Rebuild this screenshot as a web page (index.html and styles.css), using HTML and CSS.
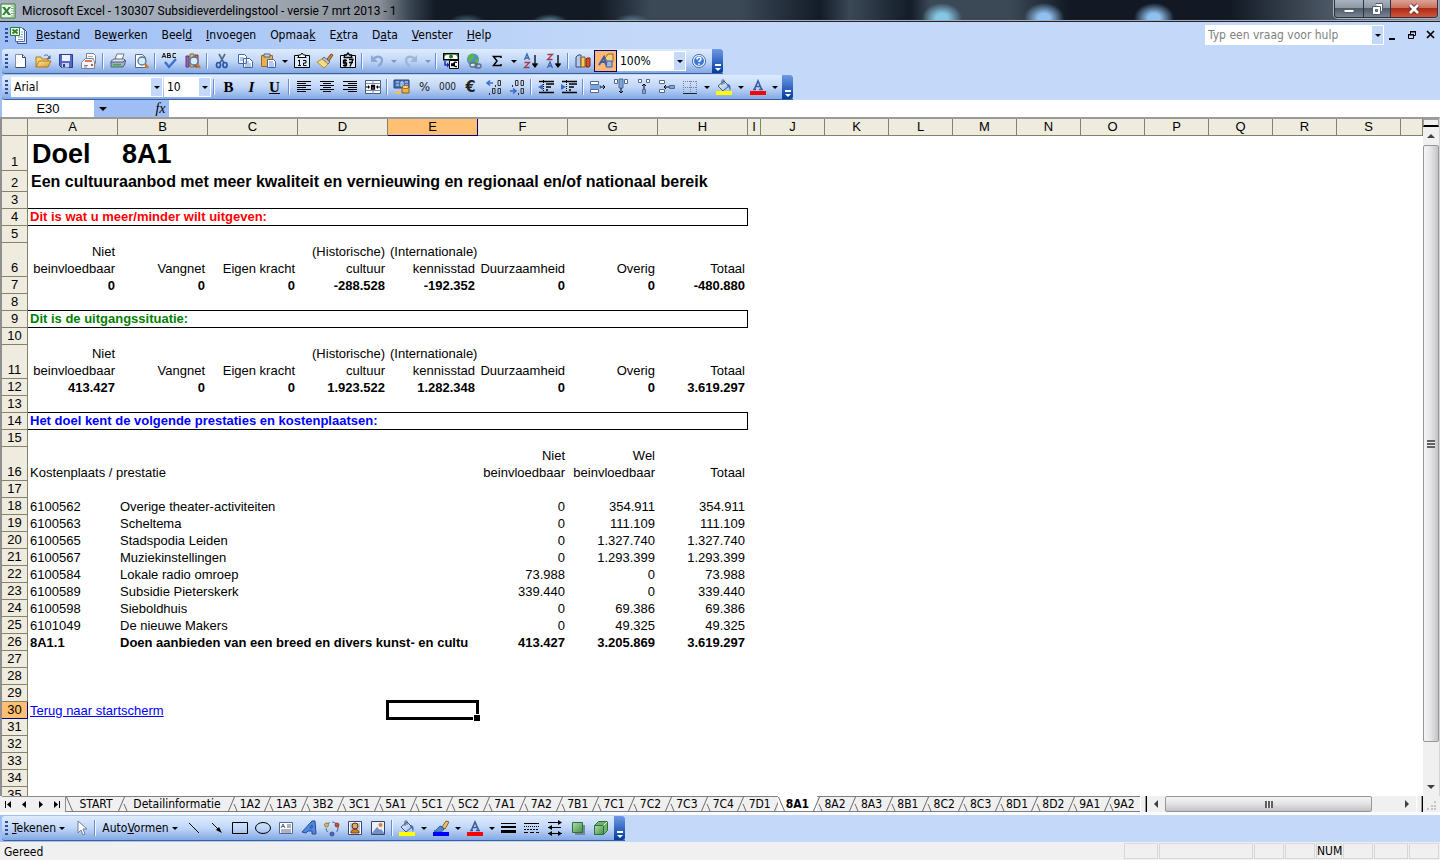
FILE: index.html
```html
<!DOCTYPE html>
<html lang="nl">
<head>
<meta charset="utf-8">
<title>Microsoft Excel - 130307 Subsidieverdelingstool - versie 7 mrt 2013 - 1</title>
<link rel="stylesheet" href="styles.css">
</head>
<body>
<svg class="defs" aria-hidden="true">
  <defs>
    <linearGradient id="gBlue" x1="0" y1="0" x2="1" y2="1"><stop offset="0" stop-color="#fff"/><stop offset="1" stop-color="#8fb0e6"/></linearGradient>
    <linearGradient id="gGreen" x1="0" y1="0" x2="1" y2="1"><stop offset="0" stop-color="#b5dcae"/><stop offset="1" stop-color="#3f8f45"/></linearGradient>
    <linearGradient id="gGold" x1="0" y1="0" x2="1" y2="1"><stop offset="0" stop-color="#ffeaa0"/><stop offset="1" stop-color="#d89a2c"/></linearGradient>
    <symbol id="excel" viewBox="0 0 16 16"><path d="M1 1h14v14H1z" fill="#e8f3e4" stroke="#2f7a34"/><path d="M11 3h3v10h-3" fill="#fff" stroke="#7fb080"/><path d="M11 5.500h3M11 8h3M11 10.500h3" stroke="#7fb080"/><path d="M2 4h9v8H2z" fill="#fff"/><path d="M2 4h3l1.700 2.500L8.500 4H11L8 8l3 4H8L6.300 9.500 4.500 12H2l3-4z" fill="#2c8534"/></symbol>
    <symbol id="bucket" viewBox="0 0 16 16"><path d="M2 7l6-5 5 5-6 5z" fill="url(#gBlue)" stroke="#44597f"/><path d="M6 6V1.500c0-1 2-1 2 0V5" fill="none" stroke="#44597f"/><path d="M12 5c3 1 3 4 2 7-1-3-1-4-3-5z" fill="#3d69b5"/><path d="M0 12h16v4H0z" fill="#ff0"/></symbol>
    <symbol id="fontcolor" viewBox="0 0 16 16"><path d="M3 10.500h3M9 10.500h4M4.500 10L8 2l3.500 8M6 7.500h4" fill="none" stroke="#3b5c9e" stroke-width="1.600"/><path d="M0 12h16v4H0z" fill="#f00"/></symbol>
    <symbol id="magnifier" viewBox="0 0 16 16"><circle cx="9" cy="8" r="4" fill="#d5edfb" stroke="#58718e" stroke-width="1.300"/><path d="M12 11l3 4" stroke="#c77b24" stroke-width="2.400"/></symbol>
  </defs>
</svg>

<div class="window">
  <header class="titlebar">
    <svg class="icon"><use href="#excel"/></svg>
    <h1>Microsoft Excel - 130307 Subsidieverdelingstool - versie 7 mrt 2013 - 1</h1>
    <div class="winbuttons">
      <button class="win-min" aria-label="Minimaliseren"><svg width="14" height="12"><path d="M2 6.500h10v3H2z" fill="#fff" stroke="#555d68"/></svg></button>
      <button class="win-max" aria-label="Vorig formaat"><svg width="14" height="14"><path d="M5.500 1.500h7v8h-2M2.500 4.500h8v8h-8z" fill="#fff" stroke="#555d68"/><path d="M5.500 7.500h2v2h-2z" fill="#8b949f" stroke="#555d68"/></svg></button>
      <button class="win-close" aria-label="Sluiten"><svg width="14" height="12"><path d="M3 2l8 8M11 2l-8 8" stroke="#56272a" stroke-width="4.500"/><path d="M3 2l8 8M11 2l-8 8" stroke="#fff" stroke-width="2.800"/></svg></button>
    </div>
  </header>

  <div class="bars">
    <nav class="menubar">
      <i class="grip"></i>
      <svg width="18" height="18" viewBox="0 0 18 18"><path d="M8.500 2.500h6l3 3v12h-9z" fill="#dfe9fa" stroke="#2f4f94"/><path d="M6.500 1.500h6l3 3v11h-9z" fill="#fff" stroke="#4c6aa8"/><path d="M12 6h2M12 8.500h2M9 11h5M9 13.500h5" fill="none" stroke="#7f9bd0"/><path d="M1.500 1.500h9v8h-9z" fill="#e6f4e3" stroke="#2f7a34"/><path d="M3.500 3.500l5 4M8.500 3.500l-5 4" stroke="#2c8534" stroke-width="2"/></svg>
      <button><u>B</u>estand</button><button>Be<u>w</u>erken</button><button>Beel<u>d</u></button><button><u>I</u>nvoegen</button><button>Opmaa<u>k</u></button><button>E<u>x</u>tra</button><button>D<u>a</u>ta</button><button><u>V</u>enster</button><button><u>H</u>elp</button>
      <div class="combo ask"><input type="text" aria-label="Typ een vraag voor hulp" placeholder="Typ een vraag voor hulp"><button class="drop" aria-label="Eerdere vragen"></button></div>
      <div class="docbuttons">
        <button aria-label="Document minimaliseren"><svg width="10" height="10"><path d="M1 8h6v2H1z"/></svg></button>
        <button aria-label="Document herstellen"><svg width="10" height="10"><path d="M3.500 4V1.500h5v4H6M1.500 4.500h5v4h-5z" fill="none" stroke="#000"/><path d="M3 1h6v1.500H3zM1 4h6v1.500H1z"/></svg></button>
        <button aria-label="Document sluiten"><svg width="10" height="10"><path d="M1 1l7 7M8 1L1 8" stroke="#000" stroke-width="1.700"/></svg></button>
      </div>
    </nav>

    <div class="toolbar" role="toolbar" aria-label="Standaard">
      <i class="grip"></i>
      <button aria-label="Nieuw"><svg class="icon"><path d="M3.500 1.500h7l3 3v10h-10z" fill="#fff" stroke="#8091ad"/><path d="M10.500 1.500v3h3v10h-10" fill="none" stroke="#35496d"/></svg></button>
      <button aria-label="Openen"><svg class="icon"><path d="M1 14V4h5l1 2h6v3" fill="#f7d77d" stroke="#ad761d"/><path d="M1 14l3-6h12l-3 6z" fill="url(#gGold)" stroke="#ad761d"/><path d="M9 3c2-2 4-1 5 1" fill="none" stroke="#45649c"/><path d="M15.500 2v4h-4z" fill="#45649c"/></svg></button>
      <button aria-label="Opslaan"><svg class="icon"><path d="M1.500 1.500h13v13h-11l-2-2z" fill="#5766c9" stroke="#303b8a"/><path d="M4 2h8v6H4z" fill="#eef1ff"/><path d="M4 10h7v4.500H4z" fill="#c9d0ea"/><path d="M5 11h2v3H5z" fill="#303b8a"/></svg></button>
      <button aria-label="E-mail"><svg class="icon"><path d="M5.500.500h7l2 2v8h-9z" fill="#fff" stroke="#7a8496"/><path d="M7 3.500h5M7 5.500h6" stroke="#aab2c0"/><path d="M.5 9.500l4-4h7l2 3v7H.500z" fill="#f4f5f9" stroke="#7a8496"/><path d="M4 8h7" stroke="#e0764f" stroke-width="2"/><path d="M10 11h2v2h-2z" fill="#d04b35"/><path d="M3 12.500h4M3 14h3" stroke="#7d879a"/></svg></button>
      <i class="sep"></i>
      <button aria-label="Afdrukken"><svg class="icon"><path d="M5 6l2-5h7l-2 6z" fill="#fff" stroke="#68778f"/><path d="M1 8l3-2h10l2 2-2 2H1z" fill="#dce2ec" stroke="#5e6d85"/><path d="M1 9h12l2-2v4l-2 3H1z" fill="#9faec5" stroke="#4f5e78"/><path d="M3 11h8v1.500H3z" fill="#42a94b"/></svg></button>
      <button aria-label="Afdrukvoorbeeld"><svg class="icon"><path d="M2.500 1.500h7l3 3v10h-10z" fill="#fff" stroke="#54698d"/><use href="#magnifier"/></svg></button>
      <i class="sep"></i>
      <button aria-label="Spelling"><svg class="icon"><path d="M0 5l2-5 2 5M1 3.500h2M5.500 0v5M5.500.500h2.500v2H5.500M5.500 4.500h3v-2h-3M14 .5h-3v4h3" fill="none" stroke="#222"/><path d="M3 9l4 5 7-8" fill="none" stroke="#3b70cf" stroke-width="2.400"/></svg></button>
      <button aria-label="Onderzoek"><svg class="icon"><path d="M1 3h3v11H1z" fill="#9a5fb0" stroke="#5f3a80"/><path d="M5 1h4v13H5z" fill="#d8c27b" stroke="#716b40"/><path d="M10 2h3v12h-3z" fill="#c8705a" stroke="#813a34"/><use href="#magnifier"/></svg></button>
      <i class="sep"></i>
      <button aria-label="Knippen"><svg class="icon"><path d="M5 1l5 9M11 1L6 10" stroke="#54698d" stroke-width="1.600"/><ellipse cx="4.500" cy="12" rx="2" ry="2.500" fill="none" stroke="#2855a8" stroke-width="1.700"/><ellipse cx="11" cy="12" rx="2" ry="2.500" fill="none" stroke="#2855a8" stroke-width="1.700"/></svg></button>
      <button aria-label="Kopiëren"><svg class="icon"><path d="M1.500 1.500h6l2 2v7h-8zM6.500 5.500h6l3 3v6h-9z" fill="#fff" stroke="#3e65af"/><path d="M3 5h4M3 7h3M8 9h4M8 11h6M8 13h6" stroke="#6f91cf"/></svg></button>
      <button aria-label="Plakken"><svg class="icon"><path d="M1.500 2.500h11v11h-11z" fill="#e8b14b" stroke="#9f6a1c"/><path d="M4 1h6v3H4z" fill="#ccd3de" stroke="#5b6270"/><path d="M7.500 6.500h6l2 2v6h-8z" fill="#fff" stroke="#3e65af"/><path d="M9 9h4M9 11h5M9 13h5" stroke="#6f91cf"/></svg></button>
      <button class="arrow" aria-label="Plakopties"></button>
      <button aria-label="Waarden plakken"><svg class="icon"><path d="M4 2.500H.500v12h15v-12H12" fill="#dcebfd" stroke="#000"/><path d="M3.500 4.500h9M4.500 4V2h2L8 0l1.500 2h2v2" fill="#fff" stroke="#000"/><path d="M4 8l1.500-1v6M4 12.500h3M9 7.500h3v2.500H9.500v2.500h3" fill="none" stroke="#000"/></svg></button>
      <button aria-label="Opmaak kopiëren"><svg class="icon"><path d="M10 6l4-5 2 1-4 6z" fill="#d0843a" stroke="#804920"/><path d="M7 4l6 5-2 2-6-5z" fill="#b9c2d2" stroke="#606c82"/><path d="M5 6l6 5-4 4-7-6z" fill="#f5dc87" stroke="#b48a31"/></svg></button>
      <button aria-label="Opmaak plakken"><svg class="icon"><path d="M4 2.500H.500v12h15v-12H12" fill="#dcebfd" stroke="#000"/><path d="M3.500 4.500h9M4.500 4V2h2L8 0l1.500 2h2v2M7 7.500H3.500v2.500h3v2.500H3M5 6v8M9 6.500h4l-3 7M9 9.500h4" fill="none" stroke="#000" stroke-width="1.300"/></svg></button>
      <i class="sep"></i>
      <button aria-label="Ongedaan maken"><svg class="icon"><path d="M4 6c4-4 9-2 9 1 0 3-2 5-4 6" fill="none" stroke="#8ba7d8" stroke-width="2.400"/><path d="M2 2v7h7z" fill="#8ba7d8"/></svg></button>
      <button class="arrow dim" aria-label="Opties ongedaan maken"></button>
      <button aria-label="Opnieuw"><svg class="icon"><path d="M12 6c-4-4-9-2-9 1 0 3 2 5 4 6" fill="none" stroke="#9fb5d9" stroke-width="2.400"/><path d="M14 2v7H7z" fill="#9fb5d9"/></svg></button>
      <button class="arrow dim" aria-label="Opties opnieuw"></button>
      <i class="sep"></i>
      <button aria-label="Euroconversie"><svg class="icon"><path d="M.7.700h14.600v6H.700z" fill="#fff" stroke="#000" stroke-width="1.400"/><path d="M1 1h3L1 4zM15 1h-3l3 3z" fill="#188027"/><circle cx="8" cy="3.500" r="2" fill="#188027"/><path d="M6.500 7.500h9v8h-9z" fill="#fff" stroke="#000"/><path d="M14 9.500c-4-2-5 5 0 4M8 11h4M8 12.500h4" fill="none" stroke="#000" stroke-width="1.300"/><path d="M2 8v4h3" fill="none" stroke="#1d2bb5" stroke-width="1.500"/><path d="M4 9.500l3 2.500-3 2.500z" fill="#1d2bb5"/></svg></button>
      <button aria-label="Hyperlink"><svg class="icon"><circle cx="7" cy="6.500" r="6" fill="#4c8ecf"/><path d="M3 2c4-3 7 0 5 3S5 6 5 10C1 9 1 4 3 2zM9 6l4-1-1 5-3 1z" fill="#5cb357"/><rect x="4" y="10" width="7" height="4" rx="2" fill="#dce5f0" stroke="#5b6c86" stroke-width="1.300"/><rect x="9" y="11" width="6" height="4" rx="2" fill="none" stroke="#5b6c86" stroke-width="1.300"/></svg></button>
      <button aria-label="AutoSom"><svg class="icon"><path d="M12 5V3.500H4.500L8 8l-3.500 4.500H12V11" fill="none" stroke="#000" stroke-width="1.500"/></svg></button>
      <button class="arrow" aria-label="Opties AutoSom"></button>
      <button aria-label="Oplopend sorteren"><svg class="icon"><path d="M1.500 7L4 1l2.500 6M2.500 5h3" fill="none" stroke="#3e63b5" stroke-width="1.300"/><path d="M1.500 9.500h5l-5 5h5" fill="none" stroke="#a53a4a" stroke-width="1.300"/><path d="M12 2v11M9.500 10.500L12 14l2.500-3.500" fill="#000" stroke="#000" stroke-width="1.300"/></svg></button>
      <button aria-label="Aflopend sorteren"><svg class="icon"><path d="M1.500 1.500h5l-5 5h5" fill="none" stroke="#a53a4a" stroke-width="1.300"/><path d="M1.500 15L4 9l2.500 6M2.500 13h3" fill="none" stroke="#3e63b5" stroke-width="1.300"/><path d="M12 2v11M9.500 10.500L12 14l2.500-3.500" fill="#000" stroke="#000" stroke-width="1.300"/></svg></button>
      <i class="sep"></i>
      <button aria-label="Wizard Grafieken"><svg class="icon"><path d="M1 4l2-2h3v12H1z" fill="#b7c7e6" stroke="#344d84"/><path d="M6 5l1-1h3v10H6z" fill="#f4cf58" stroke="#8a5b1a"/><path d="M11 6l1-1h3v8l-1 1h-3z" fill="#d84f2a" stroke="#7a2417"/></svg></button>
      <button class="on" aria-label="Tekenen"><svg class="icon"><path d="M7 5l3-4h5v7l-3 4z" fill="#f2d27b" stroke="#8c6626"/><path d="M9 8h5v6H8z" fill="#9db8e8" stroke="#3d5ea4"/><path d="M1 12L6 4l2 8M3 9h5" fill="none" stroke="#3d5ea4" stroke-width="2"/></svg></button>
      <div class="combo zoom"><select aria-label="In- en uitzoomen"><option>100%</option></select><span class="drop"></span></div>
      <button aria-label="Help"><svg class="icon"><circle cx="8" cy="8" r="6.500" fill="#fff" stroke="#3565ba"/><circle cx="8" cy="8" r="5" fill="#3f78d6"/><path d="M6 6.500c0-3 4-3 4-.5 0 1.500-2 1.500-2 3M8 10.500v1.500" fill="none" stroke="#fff" stroke-width="1.600"/></svg></button>
      <button class="cap" aria-label="Werkbalkopties Standaard"></button>
    </div>

    <div class="toolbar" role="toolbar" aria-label="Opmaak">
      <i class="grip"></i>
      <div class="combo font"><select aria-label="Lettertype"><option>Arial</option></select><span class="drop"></span></div>
      <div class="combo size"><select aria-label="Tekengrootte"><option>10</option></select><span class="drop"></span></div>
      <i class="sep"></i>
      <button class="letter" aria-label="Vet"><b>B</b></button>
      <button class="letter" aria-label="Cursief"><em>I</em></button>
      <button class="letter" aria-label="Onderstrepen"><u>U</u></button>
      <i class="sep"></i>
      <button aria-label="Links uitlijnen"><svg class="icon"><path d="M1 2.500h14M1 4.500h9M1 6.500h14M1 8.500h9M1 10.500h14M1 12.500h9" stroke="#000"/></svg></button>
      <button aria-label="Centreren"><svg class="icon"><path d="M1 2.500h14M4 4.500h8M1 6.500h14M4 8.500h8M1 10.500h14M4 12.500h8" stroke="#000"/></svg></button>
      <button aria-label="Rechts uitlijnen"><svg class="icon"><path d="M1 2.500h14M6 4.500h9M1 6.500h14M6 8.500h9M1 10.500h14M6 12.500h9" stroke="#000"/></svg></button>
      <button aria-label="Samenvoegen en centreren"><svg class="icon"><path d="M.5 1.500h15v13H.500z" fill="#fff" stroke="#44597f"/><path d="M8 1v3M8 12v3M1 4.500h15M1 11.500h15" stroke="#7187b0"/><path d="M6 6.500h3.500v3.500H6.500v-2h3" fill="none" stroke="#000" stroke-width="1.300"/><path d="M1 8h3M15 8h-3" stroke="#000"/><path d="M3 6v4l2-2zM13 6v4l-2-2z"/></svg></button>
      <i class="sep"></i>
      <button aria-label="Valuta"><svg class="icon"><path d="M0 1h15v8H0z" fill="#486fb8" stroke="#274479"/><path d="M2 3h3M2 6h3M7 3h2v4H7zM11 3h3M11 6h3" fill="none" stroke="#d6e5ff"/><path d="M8 8h7v6H8z" fill="#e9b445" stroke="#8c6119"/><ellipse cx="11.500" cy="8" rx="3.500" ry="1.500" fill="#ffe58f" stroke="#8c6119"/><ellipse cx="4" cy="13.500" rx="3" ry="1.500" fill="#f1c252"/></svg></button>
      <button class="sign" aria-label="Procentnotatie">%</button>
      <button class="sign small" aria-label="Duizendtalnotatie">000</button>
      <button class="sign euro" aria-label="Euro">€</button>
      <button aria-label="Meer decimalen"><svg class="icon"><path d="M1 4h6M4 1.500L1 4l3 2.500" fill="none" stroke="#376bca" stroke-width="1.500"/><path d="M9.500 6v2M12 1.500h2.500v5H12zM3.500 14v2M6.500 9.500H9v5H6.500zM12 9.500h2.500v5H12z" fill="none" stroke="#333"/></svg></button>
      <button aria-label="Minder decimalen"><svg class="icon"><path d="M1 12h6M4 9.500L7 12l-3 2.500" fill="none" stroke="#376bca" stroke-width="1.500"/><path d="M3.500 6v2M6.500 1.500H9v5H6.500zM12 1.500h2.500v5H12zM9.500 14v2M12 9.500h2.500v5H12z" fill="none" stroke="#333"/></svg></button>
      <i class="sep"></i>
      <button aria-label="Insprong verkleinen"><svg class="icon"><path d="M1 2.500h15M8 5h8M8 8h5M8 11h2M1 13.500h15" stroke="#000" stroke-width="1.400"/><path d="M5.500 1v14" stroke="#000" stroke-dasharray="1 1"/><path d="M5 5v6L0 8z" fill="#376bca"/></svg></button>
      <button aria-label="Insprong vergroten"><svg class="icon"><path d="M1 2.500h15M8 5h8M8 8h5M8 11h2M1 13.500h15" stroke="#000" stroke-width="1.400"/><path d="M5.500 1v14" stroke="#000" stroke-dasharray="1 1"/><path d="M0 5v6l5-3z" fill="#376bca"/></svg></button>
      <i class="sep"></i>
      <button aria-label="Cellen naar rechts"><svg class="icon"><path d="M.5 2.500h8v3h-8zM.5 10.500h8v3h-8z" fill="#fff" stroke="#54698d"/><path d="M0 6h11v4H0z" fill="#78a5e4"/><path d="M10 8h5M13 6l2 2-2 2" fill="none" stroke="#000"/></svg></button>
      <button aria-label="Cellen omlaag"><svg class="icon"><path d="M1.500.500h3v4h-3zM11.500.500h3v4h-3z" fill="#fff" stroke="#54698d"/><path d="M6 0h4v9H6z" fill="#78a5e4" stroke="#54698d"/><path d="M8 9v5M6 12l2 2 2-2" fill="none" stroke="#000"/></svg></button>
      <button aria-label="Cellen omhoog"><svg class="icon"><path d="M2.500.500h3v3h-3zM10.500.500h3v3h-3z" fill="#fff" stroke="#54698d"/><path d="M6.500 10.500h3v4h-3z" fill="#78a5e4" stroke="#54698d"/><path d="M8 10V5M6 7l2-2 2 2" fill="none" stroke="#000"/></svg></button>
      <button aria-label="Cellen naar links"><svg class="icon"><path d="M.5 1.500h5v3h-5zM.5 10.500h5v3h-5z" fill="#fff" stroke="#54698d"/><path d="M10.500 6.500h5v3h-5z" fill="#78a5e4" stroke="#54698d"/><path d="M10 8H5M7 6L5 8l2 2" fill="none" stroke="#000"/></svg></button>
      <button aria-label="Randen"><svg class="icon"><path d="M1.500 2v12M8.500 2v12M14.500 2v12M1 2.500h14M1 8.500h14" stroke="#77839a" stroke-dasharray="1 1"/><path d="M1 14.500h14" stroke="#222"/></svg></button>
      <button class="arrow" aria-label="Opties randen"></button>
      <button aria-label="Opvulkleur"><svg class="icon"><use href="#bucket"/></svg></button>
      <button class="arrow" aria-label="Opties opvulkleur"></button>
      <button aria-label="Tekstkleur"><svg class="icon"><use href="#fontcolor"/></svg></button>
      <button class="arrow" aria-label="Opties tekstkleur"></button>
      <button class="cap" aria-label="Werkbalkopties Opmaak"></button>
    </div>
  </div>

  <div class="formulabar">
    <input class="namebox" type="text" aria-label="Naamvak" value="E30">
    <button class="namedrop" aria-label="Namen"></button>
    <button class="fx" aria-label="Functie invoegen">fx</button>
    <input class="formula" type="text" aria-label="Formule">
  </div>

  <main class="workbook">
    <div class="sheet">
      <table class="grid">
        <colgroup><col class="c-head"><col class="c-wide" span="8"><col class="c-slim"><col class="c-std" span="10"><col></colgroup>
        <thead><tr><th></th><th>A</th><th>B</th><th>C</th><th>D</th><th class="sel">E</th><th>F</th><th>G</th><th>H</th><th>I</th><th>J</th><th>K</th><th>L</th><th>M</th><th>N</th><th>O</th><th>P</th><th>Q</th><th>R</th><th>S</th><th></th></tr></thead>
        <tbody>
          <tr class="r-title"><th>1</th><td>Doel</td><td colspan="3">8A1</td></tr>
          <tr class="r-sub"><th>2</th><td colspan="9">Een cultuuraanbod met meer kwaliteit en vernieuwing en regionaal en/of nationaal bereik</td></tr>
          <tr><th>3</th><td class="line" colspan="8"></td></tr>
          <tr><th>4</th><td class="box red" colspan="8">Dit is wat u meer/minder wilt uitgeven:</td></tr>
          <tr><th>5</th></tr>
          <tr class="r-two num"><th>6</th><td>Niet<br>beinvloedbaar</td><td>Vangnet</td><td>Eigen kracht</td><td>(Historische)<br>cultuur</td><td>(Internationale)<br>kennisstad</td><td>Duurzaamheid</td><td>Overig</td><td>Totaal</td></tr>
          <tr class="num bold"><th>7</th><td>0</td><td>0</td><td>0</td><td>-288.528</td><td>-192.352</td><td>0</td><td>0</td><td>-480.880</td></tr>
          <tr><th>8</th><td class="line" colspan="8"></td></tr>
          <tr><th>9</th><td class="box green" colspan="8">Dit is de uitgangssituatie:</td></tr>
          <tr><th>10</th></tr>
          <tr class="r-two num"><th>11</th><td>Niet<br>beinvloedbaar</td><td>Vangnet</td><td>Eigen kracht</td><td>(Historische)<br>cultuur</td><td>(Internationale)<br>kennisstad</td><td>Duurzaamheid</td><td>Overig</td><td>Totaal</td></tr>
          <tr class="num bold"><th>12</th><td>413.427</td><td>0</td><td>0</td><td>1.923.522</td><td>1.282.348</td><td>0</td><td>0</td><td>3.619.297</td></tr>
          <tr><th>13</th><td class="line" colspan="8"></td></tr>
          <tr><th>14</th><td class="box blue" colspan="8">Het doel kent de volgende prestaties en kostenplaatsen:</td></tr>
          <tr><th>15</th></tr>
          <tr class="r-two num"><th>16</th><td class="txt" colspan="5">Kostenplaats / prestatie</td><td>Niet<br>beinvloedbaar</td><td>Wel<br>beinvloedbaar</td><td>Totaal</td></tr>
          <tr><th>17</th></tr>
          <tr class="num"><th>18</th><td class="txt">6100562</td><td class="txt" colspan="4">Overige theater-activiteiten</td><td>0</td><td>354.911</td><td>354.911</td></tr>
          <tr class="num"><th>19</th><td class="txt">6100563</td><td class="txt" colspan="4">Scheltema</td><td>0</td><td>111.109</td><td>111.109</td></tr>
          <tr class="num"><th>20</th><td class="txt">6100565</td><td class="txt" colspan="4">Stadspodia Leiden</td><td>0</td><td>1.327.740</td><td>1.327.740</td></tr>
          <tr class="num"><th>21</th><td class="txt">6100567</td><td class="txt" colspan="4">Muziekinstellingen</td><td>0</td><td>1.293.399</td><td>1.293.399</td></tr>
          <tr class="num"><th>22</th><td class="txt">6100584</td><td class="txt" colspan="4">Lokale radio omroep</td><td>73.988</td><td>0</td><td>73.988</td></tr>
          <tr class="num"><th>23</th><td class="txt">6100589</td><td class="txt" colspan="4">Subsidie Pieterskerk</td><td>339.440</td><td>0</td><td>339.440</td></tr>
          <tr class="num"><th>24</th><td class="txt">6100598</td><td class="txt" colspan="4">Sieboldhuis</td><td>0</td><td>69.386</td><td>69.386</td></tr>
          <tr class="num"><th>25</th><td class="txt">6101049</td><td class="txt" colspan="4">De nieuwe Makers</td><td>0</td><td>49.325</td><td>49.325</td></tr>
          <tr class="num bold"><th>26</th><td class="txt">8A1.1</td><td class="txt clip" colspan="4">Doen aanbieden van een breed en divers kunst- en cultu</td><td>413.427</td><td>3.205.869</td><td>3.619.297</td></tr>
          <tr><th>27</th></tr>
          <tr><th>28</th></tr>
          <tr><th>29</th></tr>
          <tr><th class="sel">30</th><td colspan="4"><a href="#start">Terug naar startscherm</a></td><td class="active"></td></tr>
          <tr><th>31</th></tr>
          <tr><th>32</th></tr>
          <tr><th>33</th></tr>
          <tr><th>34</th></tr>
          <tr><th>35</th></tr>
        </tbody>
      </table>
    </div>
    <div class="vscroll">
      <i class="vsplit"></i>
      <button class="up" aria-label="Omhoog schuiven"></button>
      <div class="thumb"><i></i></div>
      <div class="track"></div>
      <button class="down" aria-label="Omlaag schuiven"></button>
    </div>
  </main>

  <div class="tabrow">
    <div class="tabnav">
      <button aria-label="Eerste blad"><svg width="8" height="9"><path d="M1.500 1v7" stroke="#000"/><path d="M7 1v7L3 4.500z"/></svg></button>
      <button aria-label="Vorig blad"><svg width="8" height="9"><path d="M6 1v7L2 4.500z"/></svg></button>
      <button aria-label="Volgend blad"><svg width="8" height="9"><path d="M2 1v7l4-3.500z"/></svg></button>
      <button aria-label="Laatste blad"><svg width="8" height="9"><path d="M6.500 1v7" stroke="#000"/><path d="M1 1v7l4-3.500z"/></svg></button>
    </div>
    <div class="tabs">
      <button class="start">START</button><button class="detail">Detailinformatie</button><button>1A2</button><button>1A3</button><button>3B2</button><button>3C1</button><button>5A1</button><button>5C1</button><button>5C2</button><button>7A1</button><button>7A2</button><button>7B1</button><button>7C1</button><button>7C2</button><button>7C3</button><button>7C4</button><button>7D1</button><button class="current">8A1</button><button>8A2</button><button>8A3</button><button>8B1</button><button>8C2</button><button>8C3</button><button>8D1</button><button>8D2</button><button>9A1</button><button class="last">9A2</button>
    </div>
    <i class="hsplit"></i>
    <div class="hscroll">
      <button class="left" aria-label="Naar links schuiven"></button>
      <div class="thumb"><i></i></div>
      <div class="track"></div>
      <button class="right" aria-label="Naar rechts schuiven"></button>
    </div>
    <i class="hsplit"></i>
    <svg class="corner" width="16" height="16"><path d="M10 5h2v2h-2zM7 9h2v2H7zM10 9h2v2h-2zM3 12h2v2H3zM7 12h2v2H7zM10 12h2v2h-2z" fill="#c3c3c3"/></svg>
  </div>

  <div class="drawrow">
    <div class="toolbar" role="toolbar" aria-label="Tekenen">
      <i class="grip"></i>
      <button class="label tekenen"><span><u>T</u>ekenen</span></button>
      <button aria-label="Objecten selecteren"><svg class="icon"><path d="M5 1v12l3-3 2 5 2-1-2-5h4z" fill="#fff" stroke="#6c7d9b"/></svg></button>
      <i class="sep"></i>
      <button class="label vormen"><span>Auto<u>V</u>ormen</span></button>
      <button aria-label="Lijn"><svg class="icon"><path d="M3 3l10 10" stroke="#000"/></svg></button>
      <button aria-label="Pijl"><svg class="icon"><path d="M3 3l7 7" stroke="#000"/><path d="M13 13l-6-3 3-3z"/></svg></button>
      <button aria-label="Rechthoek"><svg class="icon"><path d="M.5 2.500h15v11H.500z" fill="none" stroke="#000"/></svg></button>
      <button aria-label="Ovaal"><svg class="icon"><ellipse cx="8" cy="8" rx="7.500" ry="5.500" fill="none" stroke="#000"/></svg></button>
      <button aria-label="Tekstvak"><svg class="icon"><path d="M1.500 2.500h13v11h-13z" fill="#fff" stroke="#54698d"/><path d="M3 8l2-4 2 4M4 6.500h2M9 5h4M9 7h4M3 10h10M3 12h10" fill="none" stroke="#54698d"/></svg></button>
      <button aria-label="WordArt"><svg class="icon"><path d="M1 12L11 1h3l1 13h-4v-3H7l-2 2zM9 8h2V5z" fill="#4f88de" stroke="#234b99" fill-rule="evenodd"/></svg></button>
      <button aria-label="Diagram"><svg class="icon"><circle cx="8" cy="8" r="6" fill="none" stroke="#44597f" stroke-dasharray="4 3"/><circle cx="2.500" cy="5" r="2" fill="#e4bd49" stroke="#7d6424" stroke-width=".7"/><circle cx="13" cy="5" r="2" fill="#cc4e37" stroke="#6d2a1e" stroke-width=".7"/><circle cx="8" cy="14" r="2" fill="#5666c8" stroke="#2d3780" stroke-width=".7"/></svg></button>
      <button aria-label="Illustratie"><svg class="icon"><path d="M1.500 1.500h13v13h-13z" fill="#fff" stroke="#34466b"/><path d="M3 3h10v10H3z" fill="#b9c9df"/><circle cx="8" cy="6" r="3" fill="#e9a45c" stroke="#4b3326"/><path d="M4 13c0-5 8-5 8 0z" fill="#db7926" stroke="#703c1b"/></svg></button>
      <button aria-label="Afbeelding"><svg class="icon"><path d="M1.500 1.500h13v13h-13z" fill="#e8f0fb" stroke="#34466b"/><path d="M2 13l5-6 3 3 1-1 3 4v1H2z" fill="#6f8fc5"/><circle cx="10.500" cy="5" r="2" fill="#e57d32"/></svg></button>
      <i class="sep"></i>
      <button aria-label="Opvulkleur tekenen"><svg class="icon"><use href="#bucket"/></svg></button>
      <button class="arrow" aria-label="Opties opvulkleur tekenen"></button>
      <button aria-label="Lijnkleur"><svg class="icon"><path d="M9 7l4-6 3 1-4 7z" fill="#eec06d" stroke="#84602c"/><path d="M1 11c3 0 3-4 7-5l3 3c-1 3-6 4-10 2z" fill="#4f86d2" stroke="#2e599e"/><path d="M0 12h16v4H0z" fill="#00f"/></svg></button>
      <button class="arrow" aria-label="Opties lijnkleur"></button>
      <button aria-label="Tekstkleur tekenen"><svg class="icon"><use href="#fontcolor"/></svg></button>
      <button class="arrow" aria-label="Opties tekstkleur tekenen"></button>
      <button aria-label="Lijnstijl"><svg class="icon"><path d="M0 3.500h15" stroke="#000"/><path d="M0 7h15" stroke="#000" stroke-width="2"/><path d="M0 11.500h15" stroke="#000" stroke-width="3"/></svg></button>
      <button aria-label="Streepstijl"><svg class="icon"><path d="M0 3.500h15" stroke="#000"/><path d="M0 6.500h15" stroke="#000" stroke-dasharray="1 1"/><path d="M0 9.500h15" stroke="#000" stroke-dasharray="2 1"/><path d="M0 12.500h15" stroke="#000" stroke-dasharray="4 2"/></svg></button>
      <button aria-label="Pijlstijl"><svg class="icon"><path d="M1 2.500h13M1 7.500h13M1 13.500h14" stroke="#000"/><path d="M11 0l4 2.500L11 5zM5 5L1 7.500 5 10zM5 11l-4 2.500L5 16zM11 11l4 2.500-4 2.500z"/></svg></button>
      <button aria-label="Schaduwstijl"><svg class="icon"><path d="M5 5h10v10H5z" fill="#758798"/><path d="M2.500 2.500h10v10h-10z" fill="url(#gGreen)" stroke="#2e7137"/></svg></button>
      <button aria-label="3D-stijl"><svg class="icon"><path d="M1.500 5.500l4-4h9v9l-4 4h-9z" fill="#73b172" stroke="#2e7137"/><path d="M1.500 5.500h9v9h-9z" fill="url(#gGreen)" stroke="#2e7137"/><path d="M10.500 5.500l4-4" stroke="#dcf2d7"/></svg></button>
      <button class="cap" aria-label="Werkbalkopties Tekenen"></button>
    </div>
  </div>

  <footer class="status">
    <span class="msg">Gereed</span>
    <span class="cell c34"></span><span class="cell c94"></span><span class="cell c30"></span><span class="cell c30"></span><span class="cell c26">NUM</span><span class="cell c30"></span><span class="cell c34"></span><span class="cell c30"></span>
  </footer>
</div>
</body>
</html>
```
FILE: styles.css
```css
* { box-sizing: border-box; }

body {
  margin: 0;
  font: 12px/16px "DejaVu Sans Condensed", "DejaVu Sans", sans-serif;
  color: #000;
}

button, input, select {
  margin: 0;
  padding: 0;
  border: 0;
  border-radius: 0;
  background: none;
  font: inherit;
  color: inherit;
  outline: 0;
}

svg { display: block; }
.defs { position: absolute; width: 0; height: 0; }
.icon { width: 16px; height: 16px; overflow: visible; }

.window {
  display: flex;
  flex-direction: column;
  height: 100vh;
  overflow: hidden;
  background: #fff;
}

/* title bar */
.titlebar {
  display: flex;
  flex: none;
  align-items: center;
  height: 22px;
  padding-right: 2px;
  border-bottom: 1px solid #1e222c;
  box-shadow: inset 0 -1px #a9afb9;
  background:
    radial-gradient(ellipse 18px 8px at 467px 22px, #4a7087, transparent),
    radial-gradient(ellipse 18px 8px at 550px 22px, #6a9cbc, transparent),
    radial-gradient(ellipse 18px 8px at 632px 22px, #5a87a0, transparent),
    radial-gradient(ellipse 20px 15px at 942px 18px, #86c6e4 30%, transparent),
    radial-gradient(ellipse 20px 15px at 1044px 18px, #8fc0ee 30%, transparent),
    radial-gradient(ellipse 20px 15px at 1154px 18px, #8fc0ee 30%, transparent),
    linear-gradient(90deg, #a5b0be 0, #a0a8b3 260px, #888f98 380px, #3a4552 410px, #121a25 435px, #121a25 600px, #3b4856 650px, #3b4856 740px, #131c28 820px, #3b4856 850px, #131c28 910px, #3b4856 930px, #3b4856 1010px, #121925 1070px, #121925 1230px, #3b4552 1300px, #8b98a8 100%);
}
.titlebar h1 {
  margin: 0 auto 0 6px;
  font: 12px/20px Roboto, "Noto Sans", sans-serif;
}
.winbuttons {
  display: flex;
  align-self: flex-start;
  height: 18px;
  border: 1px solid #2b333f;
  border-top: 0;
  border-radius: 0 0 4px 4px;
  box-shadow: 0 0 0 1px #a8b0bc;
  overflow: hidden;
}
.winbuttons button {
  display: flex;
  align-items: center;
  justify-content: center;
  width: 28px;
  background: linear-gradient(#a9b2bd 0, #8c96a3 48%, #505b69 50%, #778494);
}
.winbuttons .win-max { width: 27px; border-left: 1px solid #2b333f; }
.winbuttons .win-close {
  width: 47px;
  border-left: 1px solid #2b333f;
  background: linear-gradient(#dba397 0, #cb6e5d 48%, #ad2d17 50%, #d1553a);
}

/* menu bar and tool bars */
.bars {
  display: flex;
  flex-direction: column;
  flex: none;
  gap: 1px;
  background: linear-gradient(90deg, #9ebef5, #c4d9f9 640px);
}
.menubar {
  display: flex;
  align-items: center;
  height: 26px;
  padding: 0 4px 0 5px;
}
.menubar > svg { margin: 0 2px 0 1px; }
.menubar > button { padding: 0 7px; }
.grip {
  flex: none;
  width: 3px;
  height: 15px;
  background: repeating-linear-gradient(#2e4f94 0 2px, transparent 2px 4px);
}
.docbuttons { display: flex; gap: 9px; margin-left: 4px; }

.combo {
  display: flex;
  height: 20px;
  border: 1px solid #fff;
  background: #fff;
}
.combo input, .combo select {
  flex: 1;
  min-width: 0;
  appearance: none;
  padding: 0 2px;
}
.combo input::placeholder { color: #808080; opacity: 1; }
.drop {
  display: flex;
  align-items: center;
  justify-content: center;
  flex: none;
  width: 11px;
  background: #c4d9f9;
}
.drop::after, .arrow::after, .namedrop::after, .label::after {
  content: "";
  border: 3px solid transparent;
  border-top-color: #000;
  border-bottom: 0;
}
.ask { width: 179px; margin-left: auto; }
.zoom { width: 69px; margin-right: 1px; }
.font { width: 152px; margin: 0 1px 0 3px; }
.size { width: 47px; }

.toolbar {
  display: flex;
  align-items: center;
  align-self: flex-start;
  height: 25px;
  margin-left: 2px;
  padding-left: 3px;
  border-bottom: 1px solid #3b619c;
  border-radius: 3px 0 0 3px;
  background: linear-gradient(#deebfd, #c1d7f8 50%, #83a8e3);
}
.toolbar button {
  display: flex;
  align-items: center;
  justify-content: center;
  flex: none;
  width: 23px;
  height: 22px;
}
.toolbar .arrow { width: 11px; }
.dim::after { border-top-color: #8593ad; }
.sep {
  flex: none;
  width: 2px;
  height: 16px;
  margin: 0 2px;
  border-left: 1px solid #6a8ccb;
  border-right: 1px solid #f1f6ff;
}
.toolbar .on { border: 1px solid #000080; background: #ffb871; }
.toolbar .letter { font: 15px/20px "Liberation Serif", serif; font-weight: bold; }
.toolbar .sign { font-size: 13px; color: #222; }
.toolbar .small { font-size: 10px; }
.toolbar .euro { font-size: 16px; font-weight: bold; }
.toolbar .cap {
  align-self: stretch;
  flex-direction: column;
  justify-content: flex-end;
  width: 11px;
  height: auto;
  margin-left: 2px;
  padding-bottom: 2px;
  border-radius: 0 3px 3px 0;
  background: linear-gradient(#6d9ae8, #003b9c);
}
.cap::before { content: ""; width: 6px; height: 2px; margin-bottom: 2px; background: #fff; }
.cap::after { content: ""; border: 3px solid transparent; border-top-color: #fff; border-bottom: 0; }

/* formula bar */
.formulabar {
  display: flex;
  flex: none;
  height: 17px;
  padding-left: 2px;
  background: #9ebef5;
  font: 13px/16px "Liberation Sans", Arial, sans-serif;
}
.namebox { width: 92px; background: #fff; text-align: center; }
.namedrop { display: flex; align-items: center; justify-content: center; width: 18px; }
.namedrop::after { border-width: 4px; border-bottom: 0; }
.fx { width: 57px; padding-left: 40px; font: italic 14px/16px "Liberation Serif", serif; }
.formula { flex: 1; background: #fff; }

/* sheet */
.workbook {
  display: flex;
  flex: 1;
  min-height: 0;
  border: 2px solid #8f8f8f;
  border-top-color: #9a9a9a;
  border-right: 1px solid #d4d4d4;
  border-bottom: 0;
}
.sheet { flex: 1; min-width: 0; overflow: hidden; }
.grid {
  width: 100%;
  table-layout: fixed;
  border-spacing: 0;
  font: 13px/17px "Liberation Sans", Arial, sans-serif;
}
.c-head { width: 26px; }
.c-wide { width: 90px; }
.c-slim { width: 13px; }
.c-std { width: 64px; }
.grid tr { height: 17px; }
.grid th {
  height: 17px;
  padding: 0;
  border: solid #83836c;
  border-width: 0 1px 1px 0;
  background: #efebde;
  font-weight: normal;
  line-height: 16px;
  vertical-align: bottom;
}
.grid .sel { border-color: #000080; background: #ffc073; }
.grid td { padding: 0 2px; white-space: nowrap; vertical-align: bottom; }
.num td { padding-right: 3px; text-align: right; }
.num .txt { text-align: left; }
.bold td, .r-title td, .r-sub td, .box { font-weight: bold; }
.grid .r-two { height: 34px; }
.grid .r-title { height: 35px; }
.grid .r-sub { height: 21px; }
.r-title td { padding-left: 4px; font-size: 27px; line-height: 34px; }
.r-sub td { padding-left: 3px; font-size: 16px; line-height: 20px; }
.grid .line, .grid .box { border-bottom: 1px solid #000; line-height: 16px; }
.grid .box { border-right: 1px solid #000; }
.red { color: #f00; }
.green { color: #008000; }
.blue { color: #00f; }
.grid .clip { padding-right: 0; overflow: hidden; }
.grid a { color: #00f; }
.active { position: relative; }
.active::before {
  content: "";
  position: absolute;
  inset: -2px -1px -1px -2px;
  border: 3px solid #000;
}
.active::after {
  content: "";
  position: absolute;
  right: -2px;
  bottom: -2px;
  width: 6px;
  height: 6px;
  border: solid #fff;
  border-width: 1px 0 0 1px;
  background: #000;
}

/* scroll bars */
.vscroll {
  display: flex;
  flex-direction: column;
  width: 16px;
  background: #f0f0f0;
}
.vsplit { height: 8px; border: 1px solid #a0a0a0; border-bottom: 2px solid #000; background: #f0f0f0; }
.vscroll button { display: flex; align-items: center; justify-content: center; height: 18px; }
.up::after, .down::after, .left::after, .right::after { content: ""; border: 4px solid transparent; }
.up::after { border-top: 0; border-bottom-color: #404040; }
.down::after { border-bottom: 0; border-top-color: #404040; }
.left::after { border-left: 0; border-right-color: #404040; }
.right::after { border-right: 0; border-left-color: #404040; }
.thumb {
  display: flex;
  align-items: center;
  justify-content: center;
  border: 1px solid #979797;
  border-radius: 2px;
}
.vscroll .thumb { flex: 597; background: linear-gradient(90deg, #f5f5f5, #e4e4e6 50%, #c4c4c8); }
.vscroll .track { flex: 36; }
.vscroll .thumb i { width: 8px; height: 8px; background: repeating-linear-gradient(#606060 0 2px, #f2f2f2 2px 3px); }

/* sheet tabs */
.tabrow {
  display: flex;
  flex: none;
  height: 19px;
  padding-left: 2px;
  border-bottom: 3px solid #fbfbfb;
  background: #f0f0f0;
}
.tabnav {
  display: flex;
  justify-content: space-between;
  align-items: center;
  width: 64px;
  padding: 0 4px 0 2px;
  border-top: 1px solid #8c8c8c;
  border-right: 1px solid #8c8c8c;
}
.tabs { display: flex; flex: 1074; min-width: 0; overflow: hidden; }
.tabs button {
  position: relative;
  flex: 1 1 36px;
  border: solid #7f7f7f;
  border-width: 1px 0;
  line-height: 14px;
  text-align: center;
}
.tabs button::before, .tabs button::after {
  content: "";
  position: absolute;
  top: 0;
  bottom: 0;
  width: 1px;
  background: #6a6a6a;
}
.tabs button::before { left: 3px; top: 7px; transform: skewX(23deg); }
.tabs button::after { right: 0; transform: skewX(-23deg); }
.tabs .start { flex: 0 0 56px; padding-left: 4px; }
.tabs .start::before, .tabs .current::before { top: 0; }
.tabs .detail { flex: 0 0 110px; }
.tabs .current { flex: 0 0 39px; border-top-color: #fff; background: #fff; font-weight: bold; }
.tabs .last { flex: 0 0 32px; }
.tabs .last::after { display: none; }
.hsplit { flex: none; width: 7px; border-left: 1px solid #fff; border-right: 1px solid #000; background: #f0f0f0; box-shadow: inset -1px 0 #999; }
.hscroll { display: flex; flex: 269; }
.hscroll button { display: flex; flex: none; align-items: center; justify-content: center; width: 18px; }
.hscroll .thumb { flex: 206; background: linear-gradient(#f5f5f5, #e2e2e4 50%, #c2c2c6); }
.hscroll .thumb i { width: 8px; height: 7px; background: repeating-linear-gradient(90deg, #606060 0 2px, #f2f2f2 2px 3px); }
.hscroll .track { flex: 26; }
.corner { flex: none; margin-left: 1px; }

/* drawing bar */
.drawrow { flex: none; padding: 1px 0; background: linear-gradient(90deg, #9ebef5, #c4d9f9 640px); }
.drawrow .toolbar { width: fit-content; }
.toolbar .label { gap: 3px; width: auto; }
.toolbar .tekenen { width: 61px; }
.toolbar .vormen { width: 84px; }

/* status bar */
.status {
  display: flex;
  flex: none;
  gap: 1px;
  height: 18px;
  padding: 1px 1px 1px 4px;
  background: #f0f0f0;
}
.msg { margin-right: auto; line-height: 18px; }
.cell { height: 16px; border: 1px solid #d7d7d7; text-align: center; line-height: 15px; }
.c26 { width: 26px; }
.c30 { width: 30px; }
.c34 { width: 34px; }
.c94 { width: 94px; }
```
